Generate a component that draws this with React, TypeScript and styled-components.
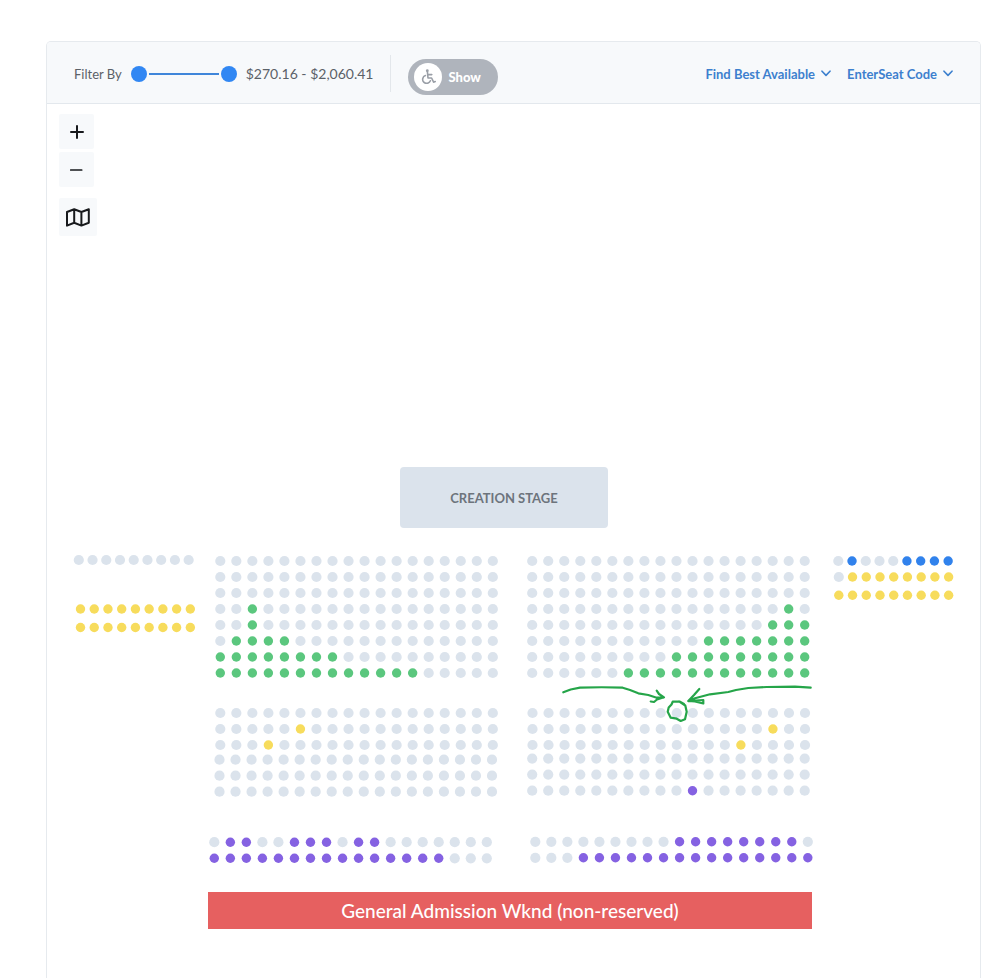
import React, { useState } from "react";
import styled, { createGlobalStyle } from "styled-components";

const GlobalStyle = createGlobalStyle`
  *, *::before, *::after { box-sizing: border-box; }
  body {
    margin: 0;
    background: #ffffff;
    font-family: Lato, "Open Sans", sans-serif;
    color: #5b6168;
  }
  button { font-family: inherit; border: 0; padding: 0; cursor: pointer; }
`;

const Page = styled.div`
  padding: 41px 19px 0 46px;
`;

const Frame = styled.main`
  min-height: calc(100vh - 41px);
  border: 1px solid #e6eaee;
  border-bottom: 0;
  border-radius: 5px 5px 0 0;
  overflow: hidden;
`;

const Header = styled.header`
  display: flex;
  align-items: center;
  justify-content: space-between;
  height: 62px;
  padding: 2px 27px 0;
  background: #f7f9fb;
  border-bottom: 1px solid #e3e8ed;
`;

const Filters = styled.div`
  display: flex;
  align-items: center;
  gap: 9px;
`;

const FilterText = styled.span<{ $size: number }>`
  font-size: ${(p) => p.$size}px;
  line-height: 20px;
  white-space: nowrap;
`;

const RangeBox = styled.div`
  display: grid;
  align-items: center;
  width: 106px;
  height: 18px;
  & > * { grid-area: 1 / 1; }
`;

const RangeTrack = styled.div`
  height: 2px;
  margin: 0 18px;
  background: #3f86da;
`;

const RangeInput = styled.input`
  appearance: none;
  width: 100%;
  height: 16px;
  margin: 0;
  background: transparent;
  pointer-events: none;
  &::-webkit-slider-thumb {
    appearance: none;
    width: 16px;
    height: 16px;
    border-radius: 50%;
    background: #3187f3;
    pointer-events: auto;
  }
`;

const Divider = styled.div`
  width: 1px;
  height: 37px;
  margin: 0 8px;
  background: #e3e7eb;
`;

const AccessToggle = styled.button`
  display: flex;
  align-items: center;
  gap: 6px;
  width: 90px;
  height: 36px;
  margin-top: 6px;
  padding-left: 6px;
  border-radius: 18px;
  background: #afb4bc;
  color: #ffffff;
  font-size: 13px;
  font-weight: 900;
`;

const ToggleKnob = styled.span`
  display: grid;
  place-items: center;
  width: 28px;
  height: 28px;
  border-radius: 50%;
  background: #ffffff;
  color: #9a9fa7;
`;

const Actions = styled.nav`
  display: flex;
  gap: 16px;
`;

const ActionButton = styled.button`
  display: flex;
  align-items: center;
  gap: 6px;
  background: transparent;
  color: #3d80ce;
  font-size: 13px;
  font-weight: 700;
  line-height: 20px;
  white-space: nowrap;
`;

const MapTools = styled.div`
  display: flex;
  flex-direction: column;
  align-items: flex-start;
  gap: 3px;
  padding: 10px 12px 0;
`;

const ToolButton = styled.button<{ $size?: number; $spaced?: boolean }>`
  display: grid;
  place-items: center;
  width: ${(p) => p.$size ?? 35}px;
  height: ${(p) => p.$size ?? 35}px;
  margin-top: ${(p) => (p.$spaced ? 8 : 0)}px;
  border-radius: 2px;
  background: #f7f9fb;
  color: #17191c;
`;

const SeatMap = styled.section`
  display: grid;
  grid-template-columns: 122fr 294fr 298fr 130fr;
  column-gap: 12px;
  align-items: start;
  padding: 231px 26px 48px 27px;
`;

const StageRow = styled.div`
  grid-column: 2 / 4;
  display: flex;
  justify-content: center;
  padding: 0 12px 24px 0;
`;

const Stage = styled.div`
  display: grid;
  place-items: center;
  width: 35%;
  height: 61px;
  border-radius: 4px;
  background: #dbe3ec;
  color: #6d747c;
  font-size: 13px;
  font-weight: 700;
`;

const Chart = styled.svg<{ $col: number; $row: number; $gap?: number }>`
  grid-column: ${(p) => p.$col};
  grid-row: ${(p) => p.$row};
  display: block;
  width: 100%;
  margin-top: ${(p) => p.$gap ?? 0}px;
  overflow: visible;
`;

const Annotation = styled.svg`
  grid-column: 3;
  grid-row: 2 / 4;
  display: block;
  width: 100%;
  overflow: visible;
  pointer-events: none;
`;

const Admission = styled.button`
  grid-column: 2 / 4;
  grid-row: 5;
  height: 37px;
  margin-top: 26px;
  background: #e66060;
  color: #ffffff;
  font-size: 19px;
  font-weight: 500;
`;

const seatColors: Record<string, string> = {
  ".": "#dbe3ec",
  g: "#5bc77e",
  y: "#f7dc5c",
  p: "#8562e2",
  b: "#3182ec",
};

/* One row of seats: x and y of the first seat, then a letter for each seat. */
type SeatRow = [x: number, y: number, seats: string];

type BlockProps = {
  label: string;
  col: number;
  row: number;
  gap?: number;
  width: number;
  height: number;
  pitch?: number;
  rows: SeatRow[];
};

function SeatBlock({ label, col, row, gap, width, height, pitch = 16.03, rows }: BlockProps) {
  return (
    <Chart $col={col} $row={row} $gap={gap} viewBox={`0 0 ${width} ${height}`} role="img" aria-label={label}>
      {rows.map(([x, y, seats]) =>
        seats.split("").map((kind, i) => (
          <circle
            key={`${y}-${i}`}
            cx={x + i * pitch}
            cy={y}
            r={kind === "." ? 5.1 : 4.7}
            fill={seatColors[kind]}
          />
        ))
      )}
    </Chart>
  );
}

const open = (n: number) => ".".repeat(n);
const fill = (kind: string, n: number) => kind.repeat(n);

const leftWing: SeatRow[] = [
  [4.8, 8, open(9)],
  [6.5, 57, fill("y", 9)],
  [6.5, 75.5, fill("y", 9)],
];

const leftFront: SeatRow[] = [
  [12.3, 9, open(18)],
  [12.3, 25, open(18)],
  [12.3, 41, open(18)],
  [12.3, 57, "..g" + open(15)],
  [12.3, 73, "..g" + open(15)],
  [12.3, 89, ".gggg" + open(13)],
  [12.3, 105, fill("g", 8) + open(10)],
  [12.3, 121, fill("g", 13) + open(5)],
];

const rightFront: SeatRow[] = [
  [18.2, 9, open(18)],
  [18.2, 25, open(18)],
  [18.2, 41, open(18)],
  [18.2, 57, open(16) + "g."],
  [18.2, 73, open(15) + "ggg"],
  [18.2, 89, open(11) + fill("g", 7)],
  [18.2, 105, open(9) + fill("g", 9)],
  [18.2, 121, open(6) + fill("g", 12)],
];

const rightWing: SeatRow[] = [
  [14.3, 9, ".b...bbbb"],
  [14.8, 25, "." + fill("y", 8)],
  [14.8, 43.2, fill("y", 9)],
];

const leftMiddle: SeatRow[] = [
  [12.3, 9, open(18)],
  [12.3, 25, open(5) + "y" + open(12)],
  [12.3, 41, open(3) + "y" + open(14)],
  [11.5, 55.7, open(18)],
  [11.5, 71.7, open(18)],
  [11.5, 87.7, open(18)],
];

const rightMiddle: SeatRow[] = [
  [18.5, 9, open(18)],
  [18.5, 25, open(15) + "y.."],
  [18.5, 41, open(13) + "y" + open(4)],
  [18.2, 54.6, open(18)],
  [18.2, 70.6, open(18)],
  [18.2, 86.7, open(10) + "p" + open(7)],
];

const leftRear: SeatRow[] = [
  [6.3, 8.2, ".pp..ppp.pp" + open(7)],
  [6.3, 24.3, fill("p", 15) + "..."],
];

const rightRear: SeatRow[] = [
  [21.3, 7.8, open(9) + fill("p", 8) + "."],
  [21.3, 23.8, "..." + fill("p", 15)],
];

const Chevron = () => (
  <svg width="10" height="7" viewBox="0 0 10 7" fill="none" stroke="currentColor" strokeWidth="1.6" strokeLinecap="round" strokeLinejoin="round" aria-hidden="true">
    <path d="M1 1.2 5 5.4 9 1.2" />
  </svg>
);

const WheelchairIcon = () => (
  <svg width="15" height="15" viewBox="0 0 15 15" fill="none" stroke="currentColor" strokeWidth="1.6" strokeLinecap="round" strokeLinejoin="round" aria-hidden="true">
    <circle cx="6.3" cy="1.7" r="1.4" fill="currentColor" stroke="none" />
    <path d="M6.4 2.6 7 9h3.6l2 4.2 1.6-.6M6.8 5.6h4" />
    <path d="M4.4 6.6a4 4 0 1 0 5 5.2" />
  </svg>
);

export default function App() {
  const [low, setLow] = useState(0);
  const [high, setHigh] = useState(100);

  return (
    <>
      <GlobalStyle />
      <Page>
        <Frame>
          <Header>
            <Filters>
              <FilterText id="price-filter" $size={13}>Filter By</FilterText>
              <RangeBox role="group" aria-labelledby="price-filter">
                <RangeTrack />
                <RangeInput type="range" aria-label="Lowest price" value={low} onChange={(e) => setLow(Math.min(+e.target.value, high))} />
                <RangeInput type="range" aria-label="Highest price" value={high} onChange={(e) => setHigh(Math.max(+e.target.value, low))} />
              </RangeBox>
              <FilterText $size={14}>$270.16 - $2,060.41</FilterText>
              <Divider />
              <AccessToggle type="button">
                <ToggleKnob><WheelchairIcon /></ToggleKnob>
                Show
              </AccessToggle>
            </Filters>
            <Actions>
              <ActionButton type="button">Find Best Available <Chevron /></ActionButton>
              <ActionButton type="button">EnterSeat Code <Chevron /></ActionButton>
            </Actions>
          </Header>

          <MapTools>
            <ToolButton type="button" aria-label="Zoom in">
              <svg width="14" height="14" viewBox="0 0 14 14" stroke="currentColor" strokeWidth="2" strokeLinecap="round">
                <path d="M7 1v12M1 7h12" />
              </svg>
            </ToolButton>
            <ToolButton type="button" aria-label="Zoom out">
              <svg width="14" height="14" viewBox="0 0 14 14" stroke="currentColor" strokeWidth="1.7" strokeLinecap="round">
                <path d="M.7 7h11" />
              </svg>
            </ToolButton>
            <ToolButton type="button" aria-label="Show map" $size={38} $spaced>
              <svg width="24" height="19" viewBox="0 0 24 19" fill="none" stroke="currentColor" strokeWidth="2" strokeLinejoin="round">
                <path d="M1 4 8.2 1.2 15.4 4 22.8 1.2v13.6l-7.4 2.8-7.2-2.8L1 17.6ZM8.2 1.2v13.6M15.4 4v13.6" />
              </svg>
            </ToolButton>
          </MapTools>

          <SeatMap aria-label="Seat map">
            <StageRow>
              <Stage>CREATION STAGE</Stage>
            </StageRow>
            <SeatBlock label="Left wing" col={1} row={2} width={122} height={130} pitch={13.73} rows={leftWing} />
            <SeatBlock label="Front left" col={2} row={2} width={294} height={130} rows={leftFront} />
            <SeatBlock label="Front right" col={3} row={2} width={298} height={130} rows={rightFront} />
            <SeatBlock label="Right wing" col={4} row={2} width={130} height={130} pitch={13.73} rows={rightWing} />
            <SeatBlock label="Middle left" col={2} row={3} gap={22} width={294} height={96} rows={leftMiddle} />
            <SeatBlock label="Middle right" col={3} row={3} gap={22} width={298} height={96} rows={rightMiddle} />
            <SeatBlock label="Rear left" col={2} row={4} gap={34} width={294} height={32} rows={leftRear} />
            <SeatBlock label="Rear right" col={3} row={4} gap={34} width={298} height={32} rows={rightRear} />
            <Annotation viewBox="0 0 298 248" fill="none" stroke="#25a549" strokeWidth="2.2" strokeLinecap="round" strokeLinejoin="round" aria-hidden="true">
              <path d="M49.3 140.3 56.7 137.5 66 135.7Q88 134.8 108.7 135.7L116 138 124.3 141.3 134.3 143 142.7 145.7 149.3 145.7M142.7 138.7 145 142 150 145.3 143 147.5 140 150 136.7 149.5" />
              <path d="M296.7 135.7 281 134.7 252.7 135 234.3 136 222 138 214.3 140 196 142.3 181 146.3 174.3 149M185.3 137 180 143 174.3 149 181 149.5 189.3 151.5V148L174.3 149" />
              <path d="M170 152 166 149.7 158.7 149.7 157.5 152.5 154.7 155.5 153.7 159.7 156.7 165.7 162.7 166.7 166.7 169 171 167.3 172.7 159.7 171.3 153.5 165 149.3" />
            </Annotation>
            <Admission type="button">General Admission Wknd (non-reserved)</Admission>
          </SeatMap>
        </Frame>
      </Page>
    </>
  );
}
